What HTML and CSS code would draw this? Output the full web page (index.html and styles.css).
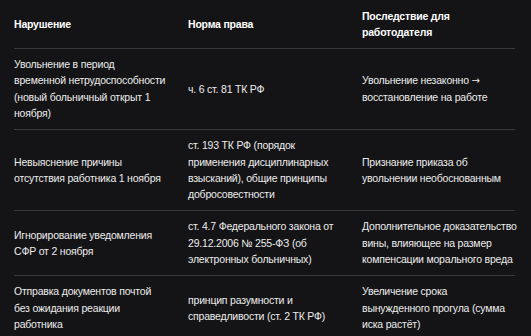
FILE: index.html
```html
<!DOCTYPE html>
<html lang="ru">
<head>
<meta charset="utf-8">
<link rel="stylesheet" href="styles.css">
</head>
<body>
<table class="tbl">
  <colgroup>
    <col class="c1"><col class="c2"><col class="c3">
  </colgroup>
  <thead>
    <tr><th>Нарушение</th><th>Норма права</th><th>Последствие для<br>работодателя</th></tr>
  </thead>
  <tbody>
    <tr>
      <td>Увольнение в период<br>временной нетрудоспособности<br>(новый больничный открыт 1<br>ноября)</td>
      <td>ч. 6 ст. 81 ТК РФ</td>
      <td>Увольнение незаконно <span class="arrow">→</span><br>восстановление на работе</td>
    </tr>
    <tr>
      <td>Невыяснение причины<br>отсутствия работника 1 ноября</td>
      <td>ст. 193 ТК РФ (порядок<br>применения дисциплинарных<br>взысканий), общие принципы<br>добросовестности</td>
      <td>Признание приказа об<br>увольнении необоснованным</td>
    </tr>
    <tr>
      <td>Игнорирование уведомления<br>СФР от 2 ноября</td>
      <td>ст. 4.7 Федерального закона от<br>29.12.2006 № 255-ФЗ (об<br>электронных больничных)</td>
      <td>Дополнительное доказательство<br>вины, влияющее на размер<br>компенсации морального вреда</td>
    </tr>
    <tr>
      <td>Отправка документов почтой<br>без ожидания реакции<br>работника</td>
      <td>принцип разумности и<br>справедливости (ст. 2 ТК РФ)</td>
      <td>Увеличение срока<br>вынужденного прогула (сумма<br>иска растёт)</td>
    </tr>
  </tbody>
</table>
</body>
</html>
```
FILE: styles.css
```css
html, body {
  margin: 0;
  background: #141416;
}
body {
  padding: 0 16px 0 14px;
  font-family: "Liberation Sans", Arial, sans-serif;
  font-size: 10.5px;
  letter-spacing: -0.2px;
  line-height: 16.3px;
  color: #ececec;
}
.tbl {
  width: 501px;
  border-collapse: collapse;
  table-layout: fixed;
}
.c1 { width: 174px; }
.c2 { width: 174px; }
.c3 { width: 153px; }
.tbl th, .tbl td {
  text-align: left;
  vertical-align: middle;
  white-space: nowrap;
  padding: 7.5px 0;
}
.tbl th {
  font-weight: 700;
  color: #ffffff;
}
.tbl tr { border-bottom: 1px solid #38383b; }
.tbl tbody tr:last-child { border-bottom: none; }
.arrow {
  font-family: "DejaVu Sans", sans-serif;
  font-size: 10px;
  letter-spacing: 0;
}
```
